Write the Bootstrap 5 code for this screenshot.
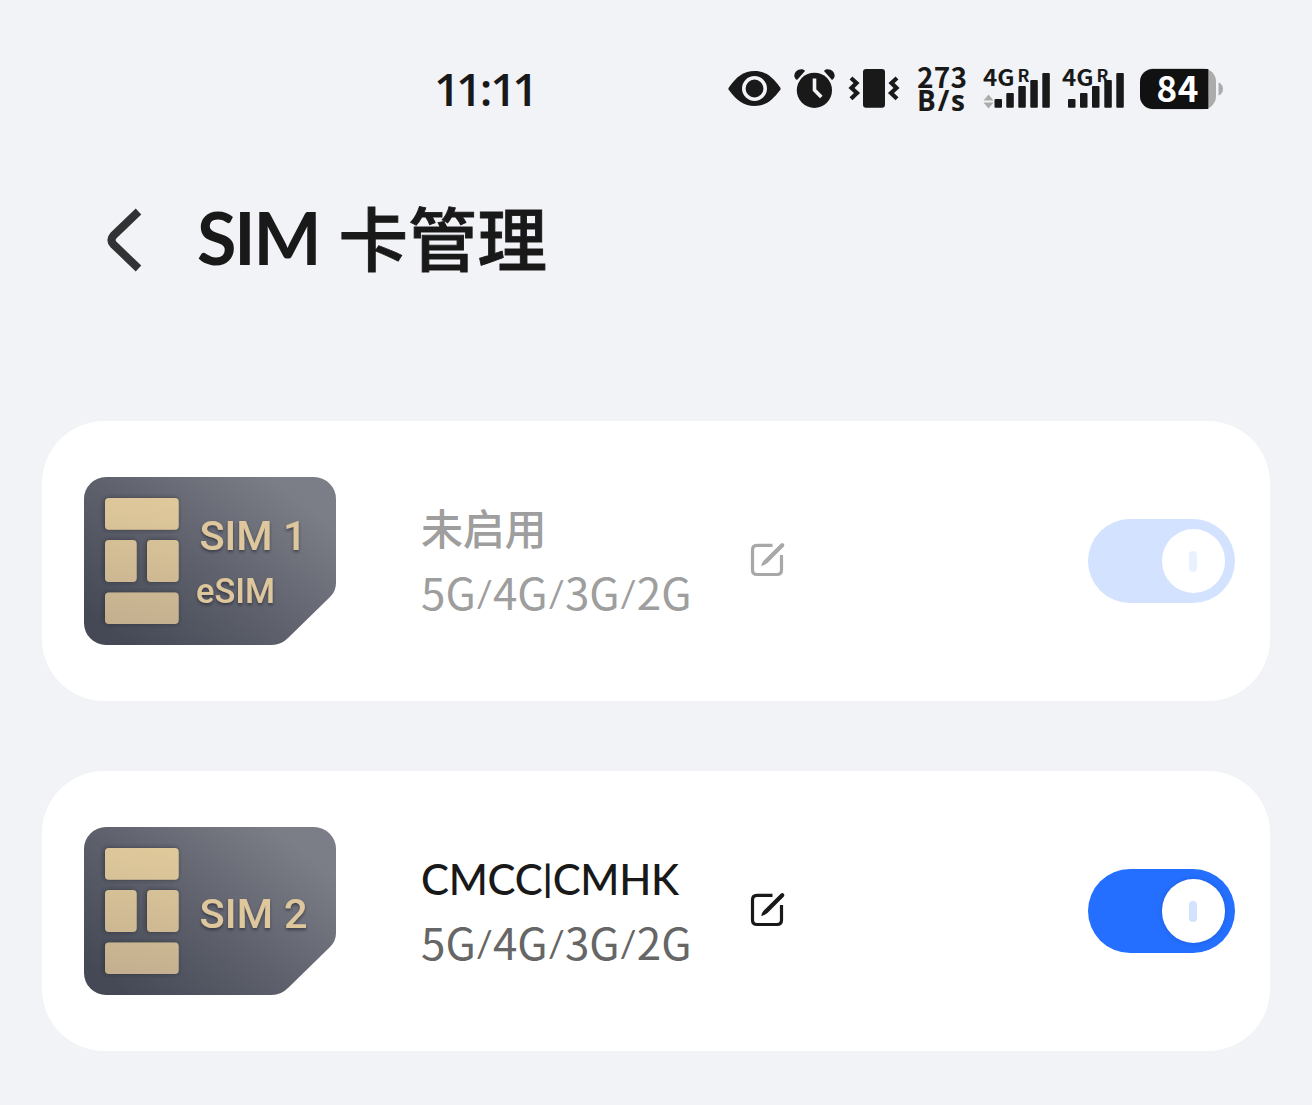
<!DOCTYPE html>
<html lang="zh-CN">
<head>
<meta charset="utf-8">
<meta name="viewport" content="width=device-width, initial-scale=1">
<title>SIM 卡管理</title>
<link href="https://cdn.jsdelivr.net/npm/bootstrap@5.3.0/dist/css/bootstrap.min.css" rel="stylesheet">
<style>
body{background:#f1f3f7;color:#191919;font-family:Lato,"Noto Sans CJK SC",sans-serif;min-height:1105px;overflow:hidden}
svg{display:block;flex:none;overflow:visible}
.status-bar{height:120px;padding:60px 0 0 434px}
.clock{width:294px;font:600 46px/57px "Open Sans","Noto Sans",sans-serif;letter-spacing:-4.2px}
.clock span{margin:0 2px 0 1.500px}
.ml-13{margin-left:13px}.ml-14{margin-left:14px}.ml-17{margin-left:17px}.ml-10{margin-left:10px}
.status-bar text{font-family:"Noto Sans CJK SC","Noto Sans",sans-serif;font-weight:700;fill:#191919}
.status-bar .unit{font-family:"Open Sans",sans-serif}
.title-bar{height:301px;padding:80px 0 0 105px}
.title-bar h1{font:500 69.500px/80px "Noto Sans CJK SC",sans-serif;margin:-4px 0 0 52px;white-space:pre;-webkit-text-stroke:.9px #191919}
.title-bar h1 span{font:700 72px/1 Lato,sans-serif;letter-spacing:-2.200px;word-spacing:4px;vertical-align:1px;-webkit-text-stroke:0}
.sim-panel{height:280px;margin:0 42px 70px;border:0;border-radius:62px;padding:0 35px 0 42px;background:#fff}
.sim-info{width:329px;margin-left:85px;white-space:nowrap}
.carrier{font-size:42px;font-weight:500;line-height:60px;color:#191919;letter-spacing:-.3px}
.carrier span{font-size:36px;line-height:1;vertical-align:3px;font-weight:700;margin:0 .6px}
.bands{font-family:"Noto Sans CJK SC",sans-serif;font-size:44px;line-height:64px;color:#666}
.bands span{font-family:Lato,sans-serif;font-size:37px;line-height:1;vertical-align:3px;display:inline-block;width:17.200px;text-align:center}
.edit-btn{color:#191919}
.is-off .carrier,.is-off .bands{color:#9e9e9e}
.is-off .edit-btn{color:#a8a8a8}
.sim-art text{font-family:Roboto,sans-serif;font-weight:500;fill:#dec79d}
.toggle{width:147px;height:84px;border-radius:42px;background:#246fff;padding-right:10px}
.knob{width:63.500px;height:63.500px;border-radius:50%;background:#fff;box-shadow:0 0 5px rgba(0,0,0,.16)}
.knob i{width:8px;height:21px;border-radius:4px;background:#d3e2ff}
.is-off .toggle{background:#d3e2ff}
.is-off .knob{box-shadow:none}
.is-off .knob i{background:#e9f1ff}
</style>
<script src="https://cdn.jsdelivr.net/npm/bootstrap@5.3.0/dist/js/bootstrap.bundle.min.js"></script>
</head>
<body>
<header class="status-bar d-flex">
  <div class="clock">11<span>:</span>11</div>
  <svg width="53" height="60" viewBox="728 60 53 60"><path fill="#191919" d="M728.5 89.5v-1.500C737 76 744 71 754.500 71S772 76 780.500 88v1.500C772 101 765 106 754.500 106S737 101 728.500 89.500Z"/><circle cx="754.500" cy="88.500" r="10.700" fill="#191919" stroke="#f1f3f7" stroke-width="3.600"/></svg>
  <svg class="ml-13" width="41" height="60" viewBox="794 60 41 60"><g fill="#191919"><circle cx="814.400" cy="90.300" r="17.600"/><path d="M797 80c-4-2-3.500-8 1.500-10.200 2.500-1.200 5.500-.8 6.500 1.200ZM832 80c4-2 3.500-8-1.500-10.200-2.500-1.200-5.500-.8-6.500 1.200Z"/></g><path d="M814.500 78.500V90L821.300 97" fill="none" stroke="#f1f3f7" stroke-width="3.600"/></svg>
  <svg class="ml-14" width="50" height="60" viewBox="849 60 50 60"><rect x="863" y="69" width="22" height="38.700" rx="3" fill="#191919"/><path d="M851 78l5.500 5-5 5 5.500 5-6 5.800M897 78l-5.500 5 5 5-5.500 5 6 5.800" fill="none" stroke="#191919" stroke-width="4.200"/></svg>
  <svg class="ml-17" width="52" height="60" viewBox="916 60 52 60"><text x="917" y="87.500" font-size="28" textLength="50">273</text><text class="unit" x="917" y="111.200" font-size="28" textLength="48">B/s</text></svg>
  <svg class="ml-14" width="69" height="60" viewBox="982 60 69 60"><text x="983" y="86" font-size="22.500" textLength="31.500" lengthAdjust="spacingAndGlyphs">4G</text><text x="1017.500" y="82" font-size="17.500" textLength="12" lengthAdjust="spacingAndGlyphs">R</text><path fill="#ababab" d="M983.500 100.500l5-6 5 6ZM983.500 102.500l5 6 5-6Z"/><g fill="#191919"><rect x="994.500" y="99" width="7.500" height="8.700" rx="1"/><rect x="1006.300" y="93" width="7.500" height="14.700" rx="1"/><rect x="1018.300" y="86" width="7.500" height="21.700" rx="1"/><rect x="1030.300" y="80" width="7.500" height="27.700" rx="1"/><rect x="1042.300" y="73" width="7.500" height="34.700" rx="1"/></g></svg>
  <svg class="ml-10" width="64" height="60" viewBox="1061 60 64 60"><text x="1062" y="86" font-size="22.500" textLength="31.500" lengthAdjust="spacingAndGlyphs">4G</text><text x="1096.500" y="82" font-size="17.500" textLength="12" lengthAdjust="spacingAndGlyphs">R</text><g fill="#191919"><rect x="1068" y="99" width="7.500" height="8.700" rx="1"/><rect x="1080" y="93" width="7.500" height="14.700" rx="1"/><rect x="1092" y="86" width="7.500" height="21.700" rx="1"/><rect x="1104.300" y="80" width="7.500" height="27.700" rx="1"/><rect x="1116.300" y="73" width="7.500" height="34.700" rx="1"/></g></svg>
  <svg class="ml-14" width="85" height="60" viewBox="1139 60 85 60"><rect x="1140" y="68.500" width="76" height="40.800" rx="13" fill="#ababab"/><path fill="#111" d="M1208.300 69V109H1153a13 13 0 0 1-13-13V82a13 13 0 0 1 13-13Z"/><path fill="#ababab" d="M1218.500 82.500c6 2 6 11 0 13Z"/><text x="1156.500" y="101.500" font-size="35" textLength="42" style="fill:#fff">84</text></svg>
</header>

<div class="title-bar d-flex align-items-start">
  <svg width="40" height="80" viewBox="105 200 40 80"><path d="M138.500 211.500L113.500 235.500q-4 4.500 0 9L138.500 268.500" fill="none" stroke="#303233" stroke-width="8" stroke-linejoin="round"/></svg>
  <h1><span>SIM </span>卡管理</h1>
</div>

<main>
  <section class="card sim-panel is-off flex-row align-items-center">
    <svg class="sim-art" width="252" height="168" viewBox="0 0 252 168">
      <defs>
        <linearGradient id="body" gradientUnits="userSpaceOnUse" x1="50" y1="175" x2="190" y2="0"><stop offset="0" stop-color="#444955"/><stop offset=".5" stop-color="#5f626d"/><stop offset="1" stop-color="#7b7e86"/></linearGradient>
        <linearGradient id="gold" gradientUnits="userSpaceOnUse" x1="70" y1="21" x2="50" y2="147"><stop offset="0" stop-color="#dfc99b"/><stop offset="1" stop-color="#c4b08f"/></linearGradient>
        <filter id="drop" x="-20%" y="-20%" width="140%" height="150%"><feDropShadow dx="-1" dy="0" stdDeviation="2" flood-color="#20232b" flood-opacity=".65"/></filter>
        <filter id="textdrop" x="-20%" y="-20%" width="140%" height="160%"><feDropShadow dx="0" dy="2" stdDeviation="1.500" flood-color="#20232b" flood-opacity=".6"/></filter>
        <g id="chip"><path fill="url(#body)" d="M22 0H230a22 22 0 0 1 22 22V106q0 8-6 14L204 161q-7 7-16 7H22a22 22 0 0 1-22-22V22A22 22 0 0 1 22 0Z"/><g fill="url(#gold)" filter="url(#drop)"><rect x="21" y="21" width="73.700" height="31.700" rx="4"/><rect x="21" y="63" width="31.700" height="42" rx="4"/><rect x="63" y="63" width="31.700" height="42" rx="4"/><rect x="21" y="115.500" width="73.700" height="31.500" rx="4"/></g></g>
      </defs>
      <use href="#chip"/>
      <g filter="url(#textdrop)"><text x="115.500" y="72.500" font-size="41.500" textLength="107">SIM 1</text><text x="112" y="126" font-size="34.500" textLength="79" lengthAdjust="spacingAndGlyphs">eSIM</text></g>
    </svg>
    <div class="sim-info"><div class="carrier">未启用</div><div class="bands">5G<span>/</span>4G<span>/</span>3G<span>/</span>2G</div></div>
    <svg class="edit-btn" width="36" height="36" viewBox="750 543 36 36"><path d="M772.500 545.300H757q-4.500 0-4.500 4.500V570q0 4.500 4.500 4.500H777q4.500 0 4.500-4.500V555" fill="none" stroke="currentColor" stroke-width="3.200"/><path fill="currentColor" d="M781 543.500q1.500-1 2.700.2t.2 2.700L767.500 563q-3 2.500-6.200 3 .3-3.500 3-6Z"/></svg>
    <div class="toggle ms-auto d-flex align-items-center justify-content-end"><div class="knob d-flex align-items-center justify-content-center"><i></i></div></div>
  </section>

  <section class="card sim-panel flex-row align-items-center">
    <svg class="sim-art" width="252" height="168" viewBox="0 0 252 168"><use href="#chip"/><g filter="url(#textdrop)"><text x="115.500" y="100.500" font-size="41.500" textLength="108">SIM 2</text></g></svg>
    <div class="sim-info"><div class="carrier">CMCC<span>|</span>CMHK</div><div class="bands">5G<span>/</span>4G<span>/</span>3G<span>/</span>2G</div></div>
    <svg class="edit-btn" width="36" height="36" viewBox="750 543 36 36"><path d="M772.500 545.300H757q-4.500 0-4.500 4.500V570q0 4.500 4.500 4.500H777q4.500 0 4.500-4.500V555" fill="none" stroke="currentColor" stroke-width="3.200"/><path fill="currentColor" d="M781 543.500q1.500-1 2.700.2t.2 2.700L767.500 563q-3 2.500-6.200 3 .3-3.500 3-6Z"/></svg>
    <div class="toggle ms-auto d-flex align-items-center justify-content-end"><div class="knob d-flex align-items-center justify-content-center"><i></i></div></div>
  </section>
</main>
</body>
</html>
